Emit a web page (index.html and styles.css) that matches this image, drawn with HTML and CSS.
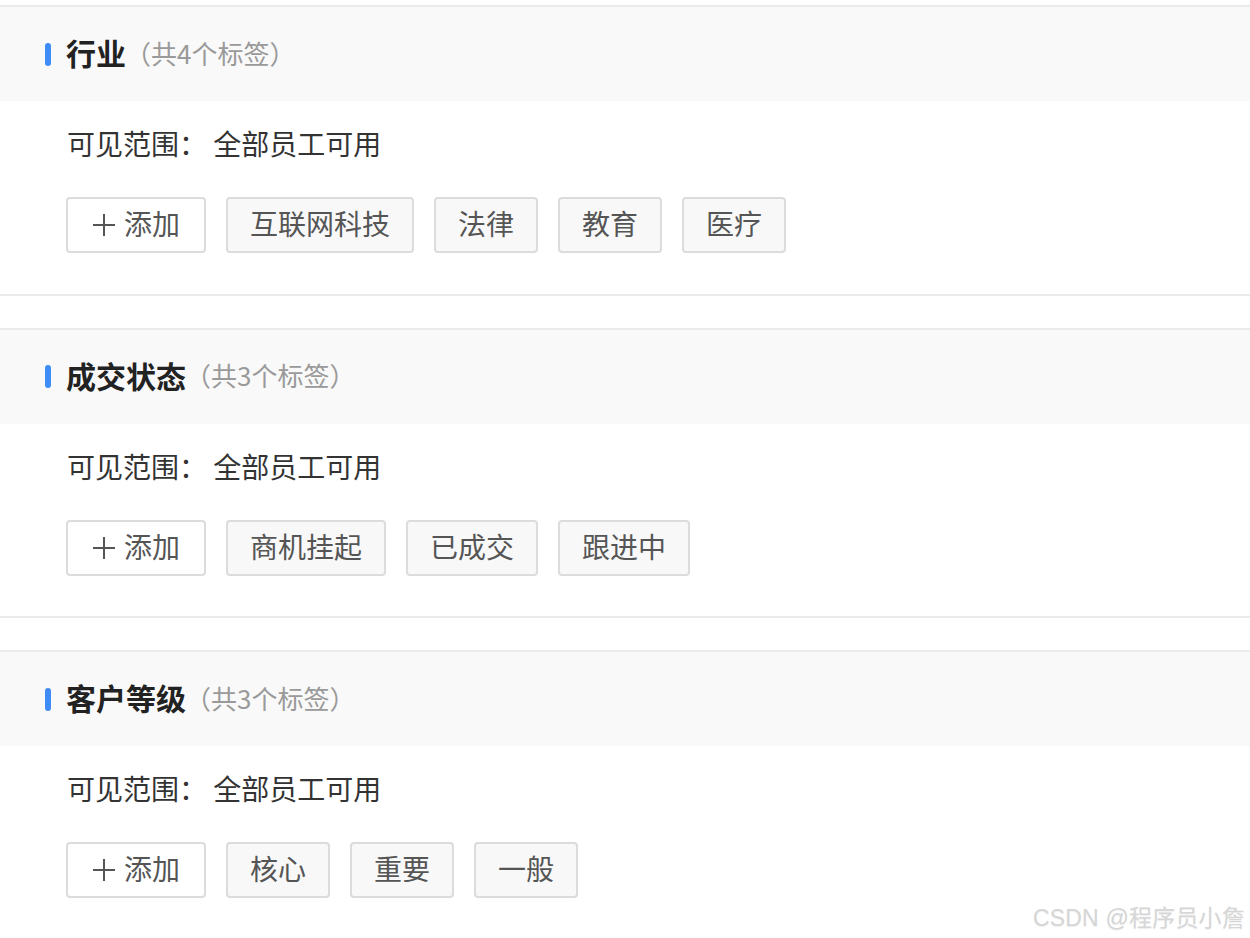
FILE: index.html
```html
<!DOCTYPE html>
<html lang="zh-CN">
<head>
<meta charset="utf-8">
<title>标签管理</title>
<link rel="stylesheet" href="styles.css">
</head>
<body>
<div class="page">
  <section class="group">
    <div class="group-head">
      <span class="bar"></span>
      <span class="title">行业</span><span class="count">（共4个标签）</span>
    </div>
    <div class="group-body">
      <div class="scope">可见范围： 全部员工可用</div>
      <div class="tags">
        <button class="tag add"><svg class="plus" viewBox="0 0 22 22" width="22" height="22"><path d="M11 0V22M0 11H22" stroke="#555" stroke-width="2" fill="none"/></svg><span>添加</span></button>
        <span class="tag">互联网科技</span>
        <span class="tag">法律</span>
        <span class="tag">教育</span>
        <span class="tag">医疗</span>
      </div>
    </div>
  </section>
  <section class="group">
    <div class="group-head">
      <span class="bar"></span>
      <span class="title">成交状态</span><span class="count">（共3个标签）</span>
    </div>
    <div class="group-body">
      <div class="scope">可见范围： 全部员工可用</div>
      <div class="tags">
        <button class="tag add"><svg class="plus" viewBox="0 0 22 22" width="22" height="22"><path d="M11 0V22M0 11H22" stroke="#555" stroke-width="2" fill="none"/></svg><span>添加</span></button>
        <span class="tag">商机挂起</span>
        <span class="tag">已成交</span>
        <span class="tag">跟进中</span>
      </div>
    </div>
  </section>
  <section class="group">
    <div class="group-head">
      <span class="bar"></span>
      <span class="title">客户等级</span><span class="count">（共3个标签）</span>
    </div>
    <div class="group-body">
      <div class="scope">可见范围： 全部员工可用</div>
      <div class="tags">
        <button class="tag add"><svg class="plus" viewBox="0 0 22 22" width="22" height="22"><path d="M11 0V22M0 11H22" stroke="#555" stroke-width="2" fill="none"/></svg><span>添加</span></button>
        <span class="tag">核心</span>
        <span class="tag">重要</span>
        <span class="tag">一般</span>
      </div>
    </div>
  </section>
</div>
<div class="watermark">CSDN @程序员小詹</div>
</body>
</html>
```
FILE: styles.css
```css
html, body {
  margin: 0;
  padding: 0;
  background: #fff;
}
body {
  font-family: "Noto Sans CJK SC", "Noto Sans", sans-serif;
  overflow: hidden;
  height: 938px;
  position: relative;
}
.page {
  padding-top: 5px;
}
.group {
  border-top: 2px solid #ebebeb;
  border-bottom: 2px solid #ebebeb;
  margin-bottom: 32px;
}
.group-head {
  height: 94px;
  background: #f9f9f9;
  display: flex;
  align-items: center;
  padding-left: 45px;
}
.bar {
  width: 6px;
  height: 23px;
  border-radius: 3px;
  background: #3f8cf6;
  margin-right: 15px;
}
.title {
  font-size: 30px;
  font-weight: 700;
  color: #222;
  line-height: 40px;
  margin-top: -4px;
}
.count {
  font-size: 26px;
  color: #9a9a9a;
  line-height: 40px;
  margin-top: -3px;
  margin-left: -1px;
}
.group-body {
  padding: 24px 0 40.5px 66px;
}
.scope {
  font-size: 28px;
  line-height: 36px;
  color: #333;
  padding-left: 1px;
}
.tags {
  margin-top: 36px;
  display: flex;
  gap: 20px;
}
.tag {
  box-sizing: border-box;
  height: 56px;
  border: 2px solid #dcdcdc;
  border-radius: 4px;
  background: #f8f8f8;
  padding: 0 22px 3px;
  font-family: "Noto Sans CJK SC", "Noto Sans", sans-serif;
  font-size: 28px;
  line-height: 49px;
  color: #555;
  display: flex;
  align-items: center;
}
.add {
  width: 140px;
  background: #fff;
  padding: 0 0 3px 25px;
  gap: 9px;
  margin: 0;
}
.plus {
  display: block;
  flex: none;
  margin-top: 3px;
}
.watermark {
  position: absolute;
  right: 5px;
  bottom: 5px;
  font-family: "Liberation Sans", "Noto Sans CJK SC", sans-serif;
  font-size: 23px;
  font-weight: 400;
  color: #d6d6d6;
  letter-spacing: 0.2px;
  text-shadow: 0 1px 1px #eeeeee;
}
```
